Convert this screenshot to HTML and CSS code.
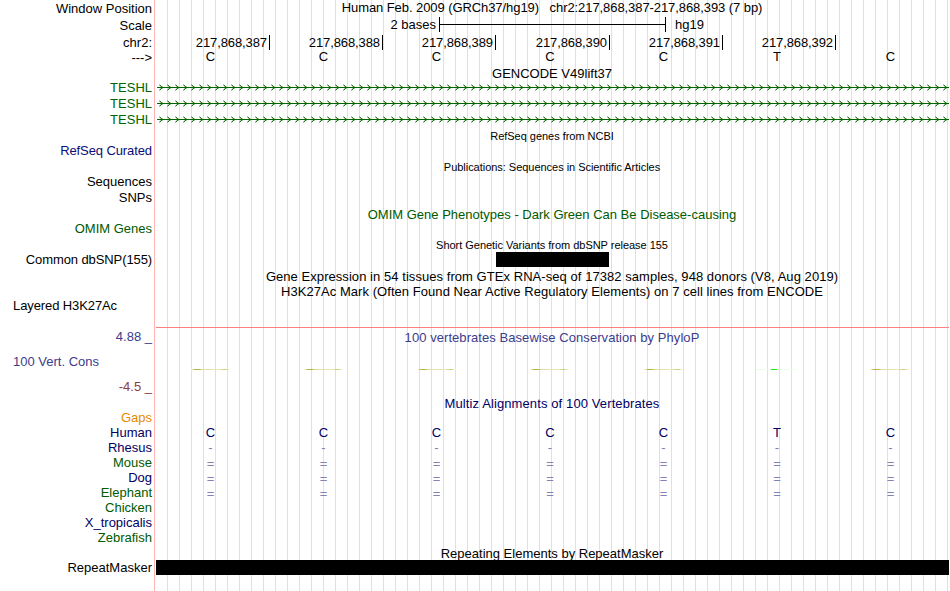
FILE: index.html
```html
<!DOCTYPE html>
<html lang="en">
<head>
  <meta charset="UTF-8">
  <title>chr2:217,868,387-217,868,393</title>
  <link rel="stylesheet" href="styles.css">
</head>
<body>

  <svg class="defs" width="0" height="0">
    <defs>
      <!-- one intron arrow, repeated every 8px -->
      <pattern id="arrows" width="8" height="7" x="3" patternUnits="userSpaceOnUse">
        <path d="M1 1h1v1h-1z M2 2h1v1h-1z M2 4h1v1h-1z M1 5h1v1h-1z" fill="#006400" fill-opacity="0.85"/>
        <path d="M0 0h1v1h-1z M0 6h1v1h-1z M0 1h1v1h-1z M0 5h1v1h-1z M1 2h1v1h-1z M1 4h1v1h-1z M3 2h1v1h-1z M3 4h1v1h-1z" fill="#006400" fill-opacity="0.35"/>
      </pattern>
    </defs>
  </svg>

  <main class="browser">
    <div class="row h16"><div class="label">Window Position</div><div class="track up"><span class="title t-pos">Human Feb. 2009 (GRCh37/hg19) &nbsp; chr2:217,868,387-217,868,393 (7 bp)</span></div></div>
    <div class="row h18"><div class="label">Scale</div><div class="track scale"><span class="scale-size">2 bases</span><span class="scale-bar"></span><span>hg19</span></div></div>
    <div class="row h16"><div class="label">chr2:</div><div class="track ruler"><span>217,868,387</span><span>217,868,388</span><span>217,868,389</span><span>217,868,390</span><span>217,868,391</span><span>217,868,392</span><span></span></div></div>
    <div class="row h15"><div class="label">---&gt;</div><div class="track bases up"><span>C</span><span>C</span><span>C</span><span>C</span><span>C</span><span>T</span><span>C</span></div></div>

    <div class="row h15"><div class="label"></div><div class="track down"><span class="title">GENCODE V49lift37</span></div></div>
    <div class="row h16 gene"><div class="label up">TESHL</div><div class="track"><svg width="793" height="7"><rect width="793" height="7" fill="url(#arrows)"/><path d="M1 3.5H793" stroke="#006400"/></svg></div></div>
    <div class="row h16 gene"><div class="label up">TESHL</div><div class="track"><svg width="793" height="7"><rect width="793" height="7" fill="url(#arrows)"/><path d="M1 3.5H793" stroke="#006400"/></svg></div></div>
    <div class="row h16 gene"><div class="label up">TESHL</div><div class="track"><svg width="793" height="7"><rect width="793" height="7" fill="url(#arrows)"/><path d="M1 3.5H793" stroke="#006400"/></svg></div></div>

    <div class="row h16"><div class="label"></div><div class="track"><span class="title small">RefSeq genes from NCBI</span></div></div>
    <div class="row h15"><div class="label up blue tight">RefSeq Curated</div><div class="track"></div></div>
    <div class="row h16"><div class="label"></div><div class="track"><span class="title small">Publications: Sequences in Scientific Articles</span></div></div>
    <div class="row h15"><div class="label up">Sequences</div><div class="track"></div></div>
    <div class="row h16"><div class="label up">SNPs</div><div class="track"></div></div>
    <div class="row h16"><div class="label"></div><div class="track"><span class="title green">OMIM Gene Phenotypes - Dark Green Can Be Disease-causing</span></div></div>
    <div class="row h15"><div class="label up green">OMIM Genes</div><div class="track"></div></div>
    <div class="row h15"><div class="label"></div><div class="track down"><span class="title small">Short Genetic Variants from dbSNP release 155</span></div></div>
    <div class="row h15"><div class="label tight">Common dbSNP(155)</div><div class="track"><span class="snp"></span></div></div>
    <div class="row h17"><div class="label"></div><div class="track down"><span class="title t-gtex">Gene Expression in 54 tissues from GTEx RNA-seq of 17382 samples, 948 donors (V8, Aug 2019)</span></div></div>
    <div class="row h15"><div class="label"></div><div class="track"><span class="title t-h3k">H3K27Ac Mark (Often Found Near Active Regulatory Elements) on 7 cell lines from ENCODE</span></div></div>
    <div class="row histone"><div class="label left up tight">Layered H3K27Ac</div><div class="track"></div></div>

    <div class="row phylop"><div class="label up">4.88 _</div><div class="track"><span class="title t-phylop">100 vertebrates Basewise Conservation by PhyloP</span></div></div>
    <div class="row cons"><div class="label left up">100 Vert. Cons</div><div class="track wiggle"><i></i><i></i><i></i><i></i><i></i><i class="t"></i><i></i></div></div>
    <div class="row h19 neg"><div class="label">-4.5 _</div><div class="track"></div></div>

    <div class="row h15"><div class="label"></div><div class="track"><span class="title navy t-multiz">Multiz Alignments of 100 Vertebrates</span></div></div>
    <div class="row h15"><div class="label up orange">Gaps</div><div class="track"></div></div>
    <div class="row h15"><div class="label up navy">Human</div><div class="track bases up navy"><span>C</span><span>C</span><span>C</span><span>C</span><span>C</span><span>T</span><span>C</span></div></div>
    <div class="row h15"><div class="label up navy">Rhesus</div><div class="track bases up pale"><span>-</span><span>-</span><span>-</span><span>-</span><span>-</span><span>-</span><span>-</span></div></div>
    <div class="row h15"><div class="label up green">Mouse</div><div class="track bases pale"><span>=</span><span>=</span><span>=</span><span>=</span><span>=</span><span>=</span><span>=</span></div></div>
    <div class="row h15"><div class="label up navy">Dog</div><div class="track bases pale"><span>=</span><span>=</span><span>=</span><span>=</span><span>=</span><span>=</span><span>=</span></div></div>
    <div class="row h15"><div class="label up green">Elephant</div><div class="track bases pale"><span>=</span><span>=</span><span>=</span><span>=</span><span>=</span><span>=</span><span>=</span></div></div>
    <div class="row h15"><div class="label up green">Chicken</div><div class="track"></div></div>
    <div class="row h15"><div class="label up navy">X_tropicalis</div><div class="track"></div></div>
    <div class="row h15"><div class="label up green">Zebrafish</div><div class="track"></div></div>

    <div class="row h14"><div class="label"></div><div class="track"><span class="title">Repeating Elements by RepeatMasker</span></div></div>
    <div class="row h15"><div class="label">RepeatMasker</div><div class="track repeat"></div></div>
  </main>

</body>
</html>
```
FILE: styles.css
```css
body {
  margin: 0;
  background: #fff;
  color: #000;
  font-family: "Liberation Sans", Arial, sans-serif;
  font-size: 13px;
  line-height: 15px;
  overflow: hidden;
}

.defs {
  display: block;
}

/* red divider after the labels, guide line every 12px */
.browser {
  width: 949px;
  height: 591px;
  background:
    linear-gradient(#ffb4b4, #ffb4b4) 154px 0 / 1px 100% no-repeat,
    repeating-linear-gradient(to right, transparent 0 11px, #dcdcff 11px 12px) 156px 0 / 793px 100% no-repeat;
}

.row {
  display: grid;
  grid-template-columns: 152px 793px;
  column-gap: 4px;
  white-space: nowrap;
}

.h14 { height: 14px; }
.h15 { height: 15px; }
.h16 { height: 16px; }
.h17 { height: 17px; }
.h18 { height: 18px; }
.h19 { height: 19px; }

.label {
  display: flex;
  align-items: center;
  justify-content: flex-end;
}

.label.left {
  justify-content: flex-start;
  padding-left: 13px;
}

.track {
  display: flex;
  align-items: center;
  justify-content: center;
}

.title {
  margin-right: 1px;
}

/* nudge text inside its row */
.up {
  margin-top: -1px;
  margin-bottom: 1px;
}

.down {
  margin-top: 1px;
  margin-bottom: -1px;
}

.small {
  font-size: 11px;
  letter-spacing: -0.03px;
}

.tight { letter-spacing: -0.1px; }
.t-pos { letter-spacing: -0.075px; }
.t-gtex { letter-spacing: 0.055px; }
.t-h3k { letter-spacing: 0.052px; }
.t-phylop { letter-spacing: 0.06px; }
.t-multiz { letter-spacing: 0.11px; }

.blue { color: #0c0c78; }
.navy { color: #000064; }
.green { color: #005a00; }
.orange { color: #e68a00; }
.pale { color: #8282b4; }

/* scale bar and coordinates */
.track.scale {
  justify-content: flex-start;
  margin-top: -1px;
  margin-bottom: 1px;
}

.scale-size {
  width: 280px;
  text-align: right;
}

.scale-bar {
  width: 225px;
  height: 15px;
  margin: 0 9px 0 3px;
  border: solid #000;
  border-width: 0 1px;
  background: linear-gradient(#000, #000) 0 7px / 100% 1px no-repeat;
}

.track.ruler,
.track.bases,
.track.wiggle {
  display: grid;
  grid-template-columns: 113px 113px 113px 114px 113px 113px 114px;
}

.ruler span {
  height: 15px;
  padding-right: 2px;
  text-align: right;
  letter-spacing: -0.1px;
}

.ruler span + span {
  border-left: 1px solid #000;
}

.bases span {
  padding-right: 4px;
  text-align: center;
}

.bases span:nth-child(n+6) {
  padding-right: 3px;
}

.gene .label {
  color: #006400;
}

.gene .track {
  align-items: flex-start;
  padding-top: 4px;
}

.gene svg {
  display: block;
}

.snp {
  width: 113px;
  height: 15px;
  background: #000;
}

.histone {
  height: 28px;
}

.histone .label {
  align-items: flex-start;
}

/* conservation plot */
.phylop {
  height: 20px;
  color: #3c3c8c;
}

.phylop .track {
  border-top: 1px solid #ff8080;
}

.cons {
  height: 30px;
  color: #3c3c8c;
}

.track.wiggle {
  align-items: start;
  padding-top: 22px;
}

.wiggle i {
  width: 39px;
  height: 1px;
  margin-left: 35px;
  background: linear-gradient(to right, #fff, #b4b43c 4px, #b4b43c 8px, #dcdca0 11px, #e8e8c0 28px, #c8c86e 34px, #fff);
}

.wiggle i.t {
  margin-left: 34px;
  background: linear-gradient(to right, #e6ffe6 15px, #14f014 15px 21px, #e6ffe6 21px);
}

.neg {
  color: #8c3c3c;
}

.repeat {
  background: #000;
}
```
